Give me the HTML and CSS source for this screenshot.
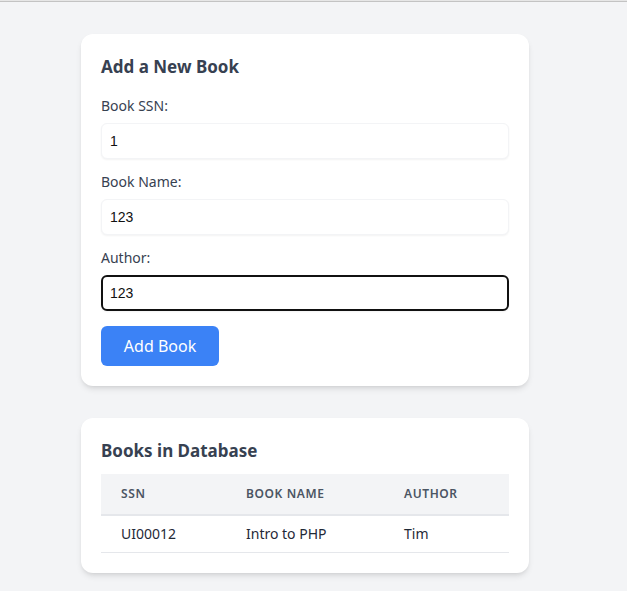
FILE: index.html
```html
<!DOCTYPE html>
<html lang="en">
<head>
<meta charset="utf-8">
<title>Books</title>
<link rel="stylesheet" href="styles.css">
</head>
<body>
<div class="topline"></div>
<main class="page">
  <section class="card">
    <h2 class="card-title">Add a New Book</h2>
    <form class="form">
      <div class="field">
        <label class="label" for="ssn">Book SSN:</label>
        <input class="input" id="ssn" type="text" value="1">
      </div>
      <div class="field">
        <label class="label" for="name">Book Name:</label>
        <input class="input" id="name" type="text" value="123">
      </div>
      <div class="field field-last">
        <label class="label" for="author">Author:</label>
        <input class="input input-focus" id="author" type="text" value="123">
      </div>
      <button class="btn" type="button">Add Book</button>
    </form>
  </section>
  <section class="card">
    <h2 class="card-title table-title">Books in Database</h2>
    <table class="table">
      <colgroup>
        <col class="col-ssn">
        <col class="col-name">
        <col>
      </colgroup>
      <thead>
        <tr><th>SSN</th><th>Book Name</th><th>Author</th></tr>
      </thead>
      <tbody>
        <tr><td>UI00012</td><td>Intro to PHP</td><td>Tim</td></tr>
      </tbody>
    </table>
  </section>
</main>
</body>
</html>
```
FILE: styles.css
```css
* { box-sizing: border-box; }
html, body { margin: 0; padding: 0; }
body {
  background: #f3f4f6;
  font-family: "Noto Sans", "Open Sans", sans-serif;
  color: #374151;
  height: 591px;
  overflow: hidden;
}
.topline {
  height: 2px;
  border-top: 1px solid #e6e6e6;
  border-bottom: 1px solid #c3c3c3;
}
.page {
  display: flex;
  flex-direction: column;
  gap: 32px;
  width: 448px;
  margin-left: 81px;
  padding-top: 32px;
}
.card {
  background: #fff;
  border-radius: 12px;
  padding: 20px;
  box-shadow: 0 4px 6px -1px rgba(0,0,0,0.1), 0 2px 4px -2px rgba(0,0,0,0.1);
}
.card-title {
  margin: 0 0 16px;
  font-size: 17px;
  line-height: 26px;
  font-weight: 700;
  color: #374151;
}
.table-title { margin-bottom: 10px; }
.form { display: flex; flex-direction: column; }
.field { display: flex; flex-direction: column; margin-bottom: 13px; }
.field-last { margin-bottom: 15px; }
.label {
  font-size: 14px;
  line-height: 20px;
  margin-bottom: 7px;
  color: #374151;
}
.input {
  height: 36px;
  width: 100%;
  border: 1px solid #f3f4f6;
  border-radius: 6px;
  padding: 0 8px;
  font-family: "Liberation Sans", Arial, sans-serif;
  font-size: 14px;
  color: #111;
  background: #fff;
  box-shadow: 0 1px 2px rgba(0,0,0,0.05);
  outline: none;
}
.input-focus {
  border: 2px solid #111;
  padding: 0 7px;
}
.btn {
  align-self: flex-start;
  width: 118px;
  height: 40px;
  border: none;
  border-radius: 6px;
  background: #3b82f6;
  color: #fff;
  font-family: "Noto Sans", "Open Sans", sans-serif;
  font-size: 16px;
}
.table {
  width: 100%;
  border-collapse: collapse;
  table-layout: fixed;
}
.col-ssn { width: 125px; }
.col-name { width: 158px; }
.table th {
  background: #f3f4f6;
  text-align: left;
  font-size: 12px;
  line-height: 16px;
  font-weight: 600;
  text-transform: uppercase;
  letter-spacing: 0.05em;
  color: #4b5563;
  padding: 12px 20px;
  border-bottom: 2px solid #e5e7eb;
}
.table td {
  font-size: 14px;
  line-height: 20px;
  color: #1f2937;
  padding: 8px 20px;
  border-bottom: 1px solid #e5e7eb;
}
```
